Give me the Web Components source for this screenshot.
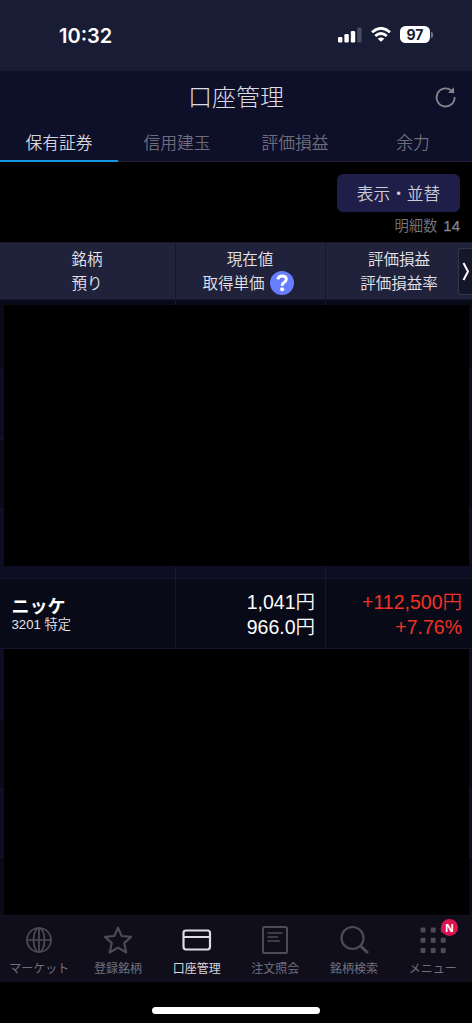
<!DOCTYPE html>
<html lang="ja"><head><meta charset="utf-8"><title>口座管理</title>
<style>
html,body{margin:0;background:#000}
body{font-family:"Liberation Sans","Noto Sans CJK JP",sans-serif;width:472px;height:1023px;overflow:hidden}
</style></head><body>
<account-app></account-app>
<script>
const define=(name,html,setup)=>customElements.define(name,class extends HTMLElement{
  connectedCallback(){
    if(this.shadowRoot)return;
    const t=document.createElement('template');
    t.innerHTML='<style>*{box-sizing:border-box}</style>'+html;
    this.attachShadow({mode:'open'}).append(t.content.cloneNode(true));
    if(setup)setup(this,this.shadowRoot);
  }
});

define('status-bar',`<style>
:host{display:flex;height:71px;background:#191c35;align-items:flex-start;padding:23px 39px 0 59px;color:#fff;box-sizing:border-box;font-family:Inter,sans-serif}
.time{font-size:20px;font-weight:600;line-height:26px;letter-spacing:0;flex:1}
svg{display:block}
.sig{margin:4px 9px 0 0}.wifi{margin:4px 9px 0 0}
.bat{display:flex;align-items:center;margin-top:3px}
.bat b{width:30px;height:17px;border-radius:5.5px;background:#fff;color:#191c35;font-size:14px;line-height:17px;text-align:center;font-weight:700}
.bat i{width:2px;height:6px;margin-left:1px;background:#74768a;border-radius:0 2px 2px 0}
</style>
<span class="time">10:32</span>
<svg class="sig" width="24" height="16" viewBox="0 0 24 16" fill="#fff"><rect x="0" y="10" width="4.4" height="5.5" rx="1.3"/><rect x="6.4" y="7" width="4.4" height="8.5" rx="1.3"/><rect x="12.8" y="4" width="4.4" height="11.5" rx="1.3"/><rect x="19.2" y="0.5" width="4.4" height="15" rx="1.3" fill="#494b60"/></svg>
<svg class="wifi" width="20" height="15" viewBox="0 0 20 15" fill="none" stroke="#fff" stroke-width="2.7"><path d="M1 5.200Q10-2.600 19 5.200M4.200 9Q10 4 15.800 9"/><path d="M10 14.800L6.700 11.700Q10 9.200 13.300 11.700Z" fill="#fff" stroke="none"/></svg>
<span class="bat"><b>97</b><i></i></span>`);

define('page-title',`<style>
:host{display:grid;grid-template-columns:40px 1fr 40px;height:54px;background:#0e0f28;align-items:center;padding:0 6px 0 6px;box-sizing:border-box;color:#dcdce3}
h1{margin:0;font-size:24px;font-weight:300;line-height:36px;text-align:center}
svg{display:block;grid-column:3;margin:0 0 0 8px}
h1{grid-column:2}
</style><h1><slot></slot></h1>
<svg width="24" height="24" viewBox="0 0 24 24" fill="none" stroke="#85858e" stroke-width="1.8"><path d="M17.200 4.400A9 9 0 1 0 20.600 11"/><path d="M14 6.800L20.200 7.300L19.900 1.200Z" fill="#85858e" stroke="none"/></svg>`);

define('tab-item',`<style>
:host{display:block;flex:1;height:37px;text-align:center;font-size:16.800px;font-weight:350;line-height:37px;color:#6d6d7b;border-bottom:1px solid #22233a;box-sizing:border-box}
:host([active]){color:#d4d4dd;border-bottom:2px solid #1497e5}
</style><slot></slot>`);

define('list-tools',`<style>
:host{display:flex;flex-direction:column;align-items:flex-end;height:80px;padding:12px 12px 0;box-sizing:border-box;background:#000}
button{font:350 16.700px/26px "Noto Sans CJK JP",sans-serif;width:123px;height:38px;border:0;border-radius:6px;background:#1f1e48;color:#ccccd8;padding:0}
p{margin:3px 0 0;font-size:14.300px;line-height:22px;font-weight:350;color:#777782;white-space:pre}
b{font-weight:400;font-size:15px;margin-left:6px;color:#85858f;-webkit-text-stroke:.25px}
</style><button>表示・並替</button><p>明細数<b>14</b></p>`);

define('table-head',`<style>
:host{display:grid;grid-template-columns:175px 150px 147px;height:58px;background:#20213b;position:relative;color:#e4e4ea;font-size:15.500px;font-weight:350;line-height:24px;border-top:1px solid #17182d;border-bottom:1px solid #17182d;box-sizing:border-box}
div{text-align:center;padding-top:5px;border-left:1px solid #17182d;white-space:nowrap}
div:first-of-type{border:0;padding-right:1px}
.mid{padding-right:1px}
.q{display:flex;justify-content:center;align-items:center;height:24px;gap:5px;padding-right:4px}
.q svg{display:block;margin-top:-2px}
.next{position:absolute;right:0;top:5px;width:14px;height:47px;background:#15162a;border:1px solid #35364b;border-right:0;border-radius:3px 0 0 3px;padding:0}
</style>
<div>銘柄<br>預り</div><div class="mid">現在値<span class="q">取得単価<svg width="24" height="24" viewBox="0 0 24 24"><circle cx="12" cy="12" r="12" fill="#667eff"/><path d="M7.800 8.300Q8.600 5 12.100 5Q16.300 5 16.300 8.300Q16.300 10.100 14 11.500Q12.100 12.700 12.100 14.800" fill="none" stroke="#fff" stroke-width="2.900"/><circle cx="12.100" cy="18.200" r="2" fill="#fff"/></svg></span></div><div>評価損益<br>評価損益率</div>
<span class="next"><svg width="13" height="45" viewBox="0 0 13 45" fill="none" stroke="#fff" stroke-width="2"><path d="M4.500 14L9 22.500L4.500 31"/></svg></span>`);

define('stock-row',`<style>
:host{display:grid;grid-template-columns:175px 150px 147px;height:69.800px;background:#0d0e24;border-bottom:1px solid #15162c;box-sizing:border-box;color:#fff;flex:none}
:host([dark]){background:#090a18}
div{border-left:1px solid #16182f;padding:11px 10px 0;text-align:right;font-size:19.500px;line-height:25px;font-weight:350;white-space:nowrap}
div:first-of-type{border:0;text-align:left;padding:16px 12px 0 11.500px}
::slotted(*){display:block}
</style><div><slot name="stock"></slot></div><div><slot name="price"></slot></div><div><slot name="gain"></slot></div>`);

define('holdings-list',`<style>
:host{display:flex;flex-direction:column;height:615px;position:relative;overflow:hidden;background:#090a18}
.cover{position:absolute;left:4px;right:3px;background:#000}
.a{top:5px;height:261px}.b{top:349px;height:266px}
.name{font:700 18px/20px "Noto Sans CJK JP",sans-serif}
.code{font-size:13.200px;line-height:20px;font-weight:350;color:#e4e4e8}
.gain{color:#f23126}
</style>
<stock-row dark></stock-row><stock-row></stock-row><stock-row dark></stock-row><stock-row></stock-row>
<stock-row dark><span slot="stock" class="name">ニッケ</span><span slot="stock" class="code">3201 特定</span><span slot="price">1,041円</span><span slot="price">966.0円</span><span slot="gain" class="gain">+112,500円</span><span slot="gain" class="gain">+7.76%</span></stock-row>
<stock-row></stock-row><stock-row dark></stock-row><stock-row></stock-row><stock-row dark></stock-row>
<span class="cover a"></span><span class="cover b"></span>`);

const icons={
globe:'<g stroke-width="1.700"><circle cx="15" cy="15" r="12"/><ellipse cx="15" cy="15" rx="5.500" ry="12"/><path d="M3 15H27M15 3V27"/></g>',
star:'<path stroke-width="2.100" stroke-linejoin="round" d="M15 2.700L18.700 11L28 11.900L21.200 18.100L23.300 27.500L15 22.700L6.700 27.500L8.800 18.100L2 11.900L11.300 11Z"/>',
card:'<path stroke-width="2.200" d="M4 5.500H25.500Q28 5.500 28 8V21.500Q28 24.500 25.500 24.500H4Q1.500 24.500 1.500 21.500V8Q1.500 5.500 4 5.500ZM2 12H28"/>',
doc:'<g stroke-width="2"><rect x="3" y="2" width="24" height="26" rx="1.500"/><path stroke-width="1.500" d="M7.500 8H22.500M7.500 12H18M7.500 16H20"/></g>',
search:'<circle cx="13.500" cy="13" r="11" stroke-width="2.200"/><path d="M21 20.500L29 28" stroke-width="3"/>',
grid:'<g fill="currentColor" stroke="none">'+[2.5,12.7,23].map(y=>[2.5,12.7,22.7].map(x=>`<rect x="${x}" y="${y}" width="5" height="5" rx="1"/>`).join('')).join('')+'</g>'};

define('nav-item',`<style>
:host{display:flex;flex-direction:column;align-items:center;flex:1;color:#4c4b56;position:relative;min-width:0}
:host([active]){color:#dedbe8}
svg{display:block;width:30px;height:30px;margin-top:9px;overflow:visible}
span{font-size:12px;line-height:18px;margin-top:5px;color:#706f7b;white-space:nowrap;font-weight:400}
:host([active]) span{color:#d5d3df}
b{display:none;position:absolute;right:14px;top:3px;width:17px;height:17px;border-radius:50%;background:#dd1452;color:#fff;font:700 11px/17px "Open Sans",sans-serif;text-align:center}
:host([badge]) b{display:block}
</style><svg viewBox="0 0 30 30" fill="none" stroke="currentColor"></svg><span><slot></slot></span><b></b>`,(el,r)=>{
  r.querySelector('svg').innerHTML=icons[el.getAttribute('icon')];
  r.querySelector('b').textContent=el.getAttribute('badge')||'';
});

define('bottom-nav',`<style>
:host{display:flex;height:67px;background:#110e1b;padding:0;box-sizing:border-box;border-top:1px solid #14111e}
</style><slot></slot>`);

define('home-indicator',`<style>
:host{display:flex;justify-content:center;height:40px;padding-top:25px;background:#000;box-sizing:border-box}
i{width:168px;height:6.500px;border-radius:4px;background:#fff}
</style><i></i>`);

define('account-app',`<style>
:host{display:flex;flex-direction:column;width:472px;height:1023px;background:#000}
:host>*{flex:none}
nav{display:flex;background:#0e0f28;height:37px}
</style>
<status-bar></status-bar><page-title>口座管理</page-title>
<nav><tab-item active>保有証券</tab-item><tab-item>信用建玉</tab-item><tab-item>評価損益</tab-item><tab-item>余力</tab-item></nav>
<list-tools></list-tools><table-head></table-head><holdings-list></holdings-list>
<bottom-nav><nav-item icon="globe">マーケット</nav-item><nav-item icon="star">登録銘柄</nav-item><nav-item icon="card" active>口座管理</nav-item><nav-item icon="doc">注文照会</nav-item><nav-item icon="search">銘柄検索</nav-item><nav-item icon="grid" badge="N">メニュー</nav-item></bottom-nav>
<home-indicator></home-indicator>`);
</script></body></html>
